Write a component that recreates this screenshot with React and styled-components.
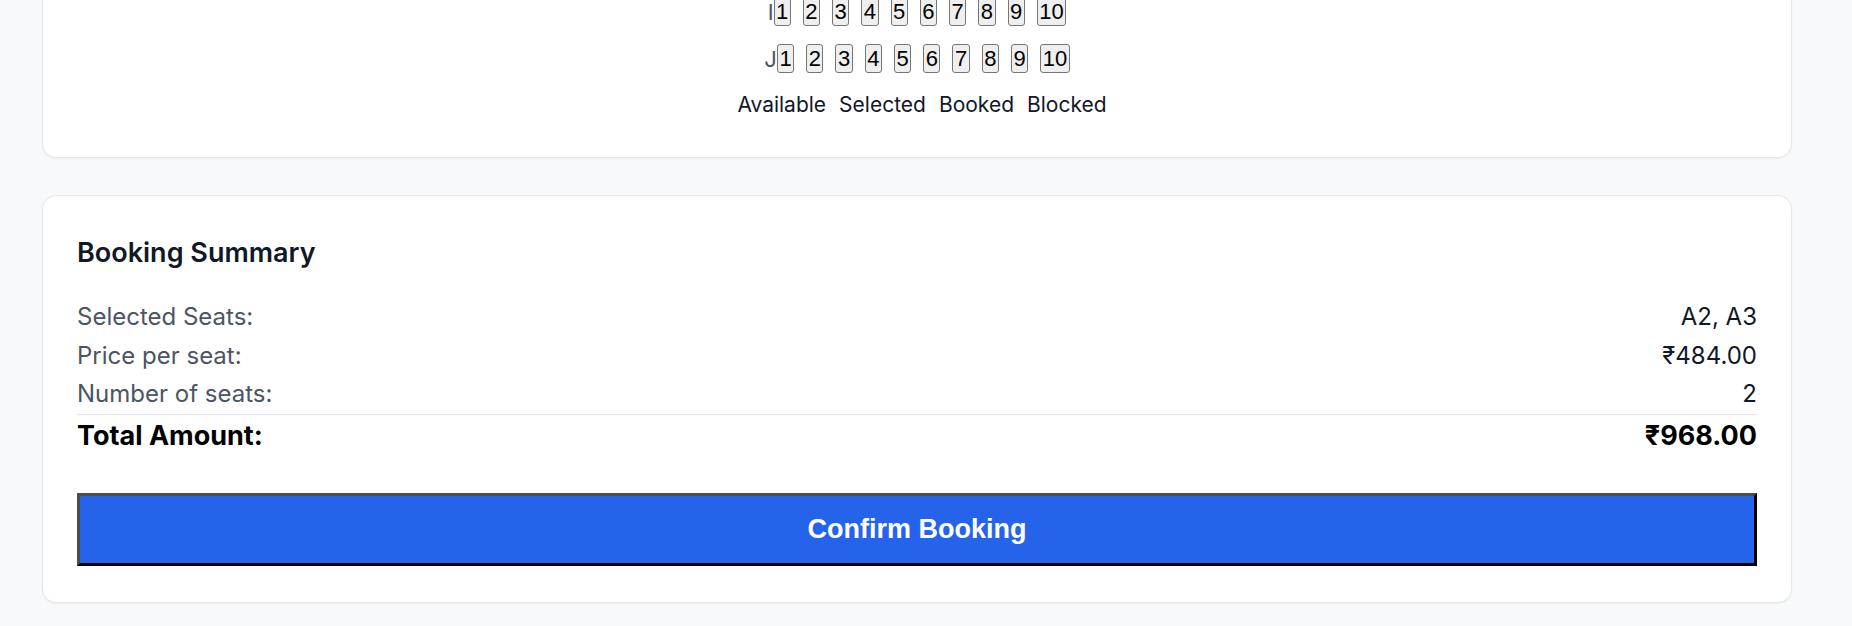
import React from "react";
import styled, { createGlobalStyle } from "styled-components";

const GlobalStyle = createGlobalStyle`
  html, body {
    margin: 0;
    padding: 0;
    background: #f8f9fb;
    font-family: Inter, "Noto Sans", sans-serif;
    overflow: hidden;
  }
`;

const rows = ["A", "B", "C", "D", "E", "F", "G", "H", "I", "J"];
const seats = [1, 2, 3, 4, 5, 6, 7, 8, 9, 10];
const selected = ["A2", "A3"];
const pricePerSeat = 484;

const Page = styled.div`
  padding: 0 60px 24px 42px;
  margin-top: -415px;
  display: flex;
  flex-direction: column;
  gap: 37px;
`;

const Card = styled.section`
  background: #ffffff;
  border: 1px solid #e5e7eb;
  border-radius: 14px;
  box-shadow: 0 1px 2px rgba(0, 0, 0, 0.05);
  padding: 35px 34px ${(p) => p.$bottom || "36px"};
`;

const SeatMap = styled.div`
  display: flex;
  flex-direction: column;
  align-items: center;
  gap: 18px;
`;

const SeatRow = styled.div`
  display: flex;
  align-items: center;
`;

const RowLabel = styled.span`
  color: #4b5563;
  font-size: 22px;
`;

const Seats = styled.div`
  display: flex;
  gap: 12px;
`;

const Seat = styled.button`
  font-family: "Liberation Sans", Arial, sans-serif;
  font-size: 22px;
  line-height: 25px;
  height: 29px;
  color: #000;
  background: #efefef;
  border: 1px solid #767676;
  border-radius: 3px;
  padding: 1px 1.5px;
`;

const Legend = styled.div`
  display: flex;
  gap: 13px;
  padding-left: 10px;
  font-size: 21px;
  line-height: 28px;
  color: #111827;
`;

const Heading = styled.h2`
  margin: 1px 0 24px;
  font-size: 27px;
  line-height: 42px;
  font-weight: 600;
  color: #111827;
`;

const SummaryRow = styled.div`
  display: flex;
  justify-content: space-between;
  font-size: 24px;
  line-height: 38.5px;
`;

const Label = styled.span`
  color: #4b5563;
`;

const Value = styled.span`
  color: #111827;
`;

const TotalRow = styled.div`
  display: flex;
  justify-content: space-between;
  border-top: 1px solid #e5e7eb;
  padding-top: 4px;
  font-size: 27px;
  line-height: 34px;
  font-weight: 700;
  color: #000;
`;

const ConfirmButton = styled.button`
  display: block;
  width: 100%;
  margin-top: 40px;
  height: 73px;
  background: #2563eb;
  color: #ffffff;
  font-family: "Liberation Sans", Arial, sans-serif;
  font-size: 27px;
  font-weight: 700;
  border-style: solid;
  border-width: 3px;
  border-color: #4d4d4d #000 #000 #4d4d4d;
  cursor: pointer;
`;

export default function App() {
  const total = pricePerSeat * selected.length;
  return (
    <>
      <GlobalStyle />
      <Page>
        <Card $bottom="38px">
          <SeatMap>
            {rows.map((r) => (
              <SeatRow key={r}>
                <RowLabel>{r}</RowLabel>
                <Seats>
                  {seats.map((n) => (
                    <Seat key={n}>{n}</Seat>
                  ))}
                </Seats>
              </SeatRow>
            ))}
            <Legend>
              <span>Available</span>
              <span>Selected</span>
              <span>Booked</span>
              <span>Blocked</span>
            </Legend>
          </SeatMap>
        </Card>
        <Card>
          <Heading>Booking Summary</Heading>
          <SummaryRow>
            <Label>Selected Seats:</Label>
            <Value>{selected.join(", ")}</Value>
          </SummaryRow>
          <SummaryRow>
            <Label>Price per seat:</Label>
            <Value>₹{pricePerSeat.toFixed(2)}</Value>
          </SummaryRow>
          <SummaryRow>
            <Label>Number of seats:</Label>
            <Value>{selected.length}</Value>
          </SummaryRow>
          <TotalRow>
            <span>Total Amount:</span>
            <span>₹{total.toFixed(2)}</span>
          </TotalRow>
          <ConfirmButton>Confirm Booking</ConfirmButton>
        </Card>
      </Page>
    </>
  );
}
